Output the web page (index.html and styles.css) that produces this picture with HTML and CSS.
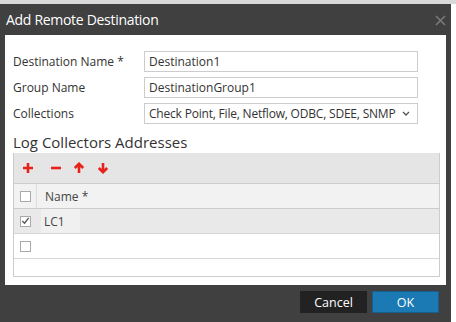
FILE: index.html
```html
<!DOCTYPE html>
<html lang="en">
<head>
  <meta charset="UTF-8" />
  <title>Add Remote Destination</title>
  <link rel="stylesheet" href="styles.css">
</head>
<body>
  <div class="page">
    <div class="dialog">
      <div class="titlebar">
        <span class="title">Add Remote Destination</span>
        <svg class="close" width="11" height="11" viewBox="0 0 11 11"><path d="M1 1L10 10M10 1L1 10" stroke="#7a7a7a" stroke-width="1.6"/></svg>
      </div>

      <div class="content">
        <div class="form">
          <label class="label">Destination Name *</label>
          <div class="input">Destination1</div>
          <label class="label">Group Name</label>
          <div class="input">DestinationGroup1</div>
          <label class="label">Collections</label>
          <div class="input select">
            <span class="select-text">Check Point, File, Netflow, ODBC, SDEE, SNMP</span>
            <svg class="chevron" width="8" height="5" viewBox="0 0 8 5"><path d="M1 1L4 4L7 1" fill="none" stroke="#555" stroke-width="1.3"/></svg>
          </div>
        </div>

        <h3 class="section-title">Log Collectors Addresses</h3>

        <div class="grid">
          <div class="toolbar">
            <svg class="tool-add" width="12" height="12" viewBox="0 0 12 12"><path d="M6 1V11M1 6H11" stroke="#e8211b" stroke-width="2.6"/></svg>
            <svg class="tool-remove" width="12" height="12" viewBox="0 0 12 12"><path d="M1 6H11" stroke="#e8211b" stroke-width="2.6"/></svg>
            <svg class="tool-up" width="12" height="12" viewBox="0 0 12 12"><path d="M6 11V2M1.8 6L6 1.8L10.2 6" fill="none" stroke="#e8211b" stroke-width="2.6"/></svg>
            <svg class="tool-down" width="12" height="12" viewBox="0 0 12 12"><path d="M6 1V10M1.8 6L6 10.2L10.2 6" fill="none" stroke="#e8211b" stroke-width="2.6"/></svg>
          </div>
          <div class="row header">
            <div class="check-cell"><span class="checkbox"></span></div>
            <div class="name-cell">Name *</div>
          </div>
          <div class="row selected">
            <div class="check-cell">
              <span class="checkbox">
                <svg width="10" height="10" viewBox="0 0 10 10"><path d="M1.5 5L4 7.5L8.5 1.5" fill="none" stroke="#555" stroke-width="1.5"/></svg>
              </span>
            </div>
            <div class="name-cell"><span class="cell-edit">LC1</span></div>
          </div>
          <div class="row">
            <div class="check-cell"><span class="checkbox"></span></div>
            <div class="name-cell"></div>
          </div>
        </div>
      </div>

      <div class="footer">
        <button class="btn btn-cancel">Cancel</button>
        <button class="btn btn-ok">OK</button>
      </div>
    </div>
  </div>
</body>
</html>
```

FILE: styles.css
```css
html, body {
  margin: 0;
  padding: 0;
  background: #fff;
  font-family: 'Open Sans', 'Noto Sans', sans-serif;
  color: #333;
}

.page {
  border-top: 4px solid #d9d9d9;
  height: 318px;
}

.dialog {
  width: 451px;
  height: 318px;
  background: #404040;
  display: flex;
  flex-direction: column;
}

.titlebar {
  height: 31px;
  display: flex;
  align-items: center;
  justify-content: space-between;
  padding: 0 5px 0 6px;
}

.title {
  color: #fff;
  font-size: 14px;
  letter-spacing: -0.3px;
}

.close {
  margin-top: 1px;
}

.content {
  background: #fff;
  margin: 0 5px;
  height: 250px;
  padding: 16px 6px 0 8px;
  box-sizing: border-box;
}

.form {
  display: grid;
  grid-template-columns: 131px 274px;
  row-gap: 5px;
  align-items: center;
}

.label {
  font-size: 12px;
  color: #333;
}

.input {
  height: 21px;
  box-sizing: border-box;
  border: 1px solid #ccc;
  padding: 0 4px;
  font-size: 12px;
  line-height: 19px;
  color: #333;
  white-space: nowrap;
  overflow: hidden;
}

.select {
  display: flex;
  align-items: center;
  justify-content: space-between;
  padding-right: 7px;
}

.select-text {
  letter-spacing: -0.2px;
}

.chevron {
  flex: none;
}

.section-title {
  margin: 8px 0 0;
  font-size: 15px;
  font-weight: normal;
  color: #333;
  line-height: 21px;
}

.grid {
  width: 427px;
  height: 124px;
  box-sizing: border-box;
  border: 1px solid #ccc;
  border-top: none;
}

.toolbar {
  height: 30px;
  background: #e5e5e5;
  display: flex;
  align-items: center;
  padding-left: 8px;
}

.tool-remove {
  margin-left: 16px;
}

.tool-up {
  margin-left: 11px;
}

.tool-down {
  margin-left: 12px;
}

.row {
  height: 24px;
  display: flex;
  align-items: stretch;
  border-bottom: 1px solid #d6d6d6;
  font-size: 12px;
}

.row.header {
  background: #f2f2f2;
  border-top: 1px solid #ccc;
  border-bottom: 1px solid #ccc;
}

.row.selected {
  background: #e9e9e9;
}

.check-cell {
  width: 21px;
  display: flex;
  align-items: center;
  justify-content: center;
  padding-left: 1px;
}

.header .check-cell {
  border-right: 1px solid #ddd;
}

.checkbox {
  width: 11px;
  height: 11px;
  box-sizing: border-box;
  border: 1px solid #aaa;
  background: #fff;
  display: flex;
  align-items: center;
  justify-content: center;
}

.name-cell {
  display: flex;
  align-items: center;
  padding-left: 8px;
  color: #444;
}

.cell-edit {
  display: flex;
  align-items: center;
  height: 100%;
  width: 36px;
  margin-left: -3px;
  padding-left: 3px;
  background: #f0f0f0;
}

.footer {
  flex: 1;
  display: flex;
  justify-content: flex-end;
  align-items: flex-start;
  gap: 5px;
  padding: 6px 12px 0 0;
}

.btn {
  width: 67px;
  height: 22px;
  border: none;
  color: #fff;
  font-family: 'Open Sans', 'Noto Sans', sans-serif;
  font-size: 12.5px;
  padding: 0;
  cursor: pointer;
}

.btn-cancel {
  background: #222;
}

.btn-ok {
  background: #1b7ab3;
  border: 1px solid #155f8c;
}
```
